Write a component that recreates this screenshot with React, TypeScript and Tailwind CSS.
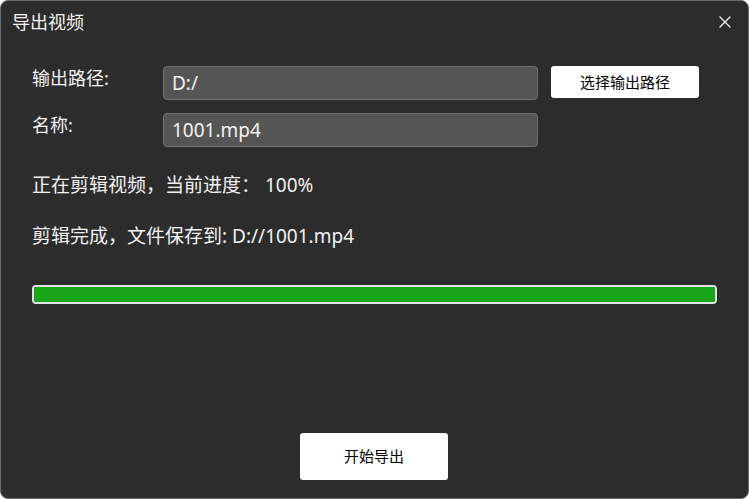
import { X } from "lucide-react";

export default function App() {
  return (
    <div
      className="w-[749px] h-[499px] bg-[#2c2c2c] border border-[#6b6b6b] rounded-[8px] text-[#f2f2f2] flex flex-col overflow-hidden"
      style={{ fontFamily: '"Noto Sans", "Noto Sans CJK SC", sans-serif' }}
    >
      {/* Title bar */}
      <div className="h-[42px] flex items-center justify-between pl-[11px] pr-[13px]">
        <span className="text-[18px]">导出视频</span>
        <X className="w-[20px] h-[20px] text-[#e6e6e6]" strokeWidth={1.6} />
      </div>

      <div className="pl-[31px] pr-[32px] pt-[23px] flex flex-col">
        <div className="flex items-start h-[33px]">
          <span className="w-[131px] text-[18px] leading-[24px]">输出路径:</span>
          <div className="w-[375px] h-[34px] bg-[#555555] border border-[#707070] rounded-[4px] flex items-center px-[8px] text-[19px]">
            D:/
          </div>
          <button className="ml-[13px] w-[148px] h-[32px] bg-white rounded-[3px] text-black text-[15px]">
            选择输出路径
          </button>
        </div>
        <div className="flex items-start mt-[14px] h-[33px]">
          <span className="w-[131px] text-[18px] leading-[24px]">名称:</span>
          <div className="w-[375px] h-[34px] bg-[#555555] border border-[#707070] rounded-[4px] flex items-center px-[8px] text-[19px]">
            1001.mp4
          </div>
        </div>

        <div className="mt-[27px] text-[19px] leading-[24px]">正在剪辑视频，当前进度：&nbsp;100%</div>
        <div className="mt-[27px] text-[19px] leading-[24px]">剪辑完成，文件保存到: D://1001.mp4</div>

        <div className="mt-[37px] w-[685px] h-[19px] border-2 border-[#e2e2e2] rounded-[4px] bg-[#2c2c2c] overflow-hidden">
          <div className="h-full w-full bg-[#18a518] rounded-[2px]" />
        </div>
      </div>

      <div className="flex-1" />
      <div className="flex justify-center pb-[18px]">
        <button className="w-[148px] h-[47px] bg-white rounded-[3px] text-black text-[15px] mr-[1px]">
          开始导出
        </button>
      </div>
    </div>
  );
}
